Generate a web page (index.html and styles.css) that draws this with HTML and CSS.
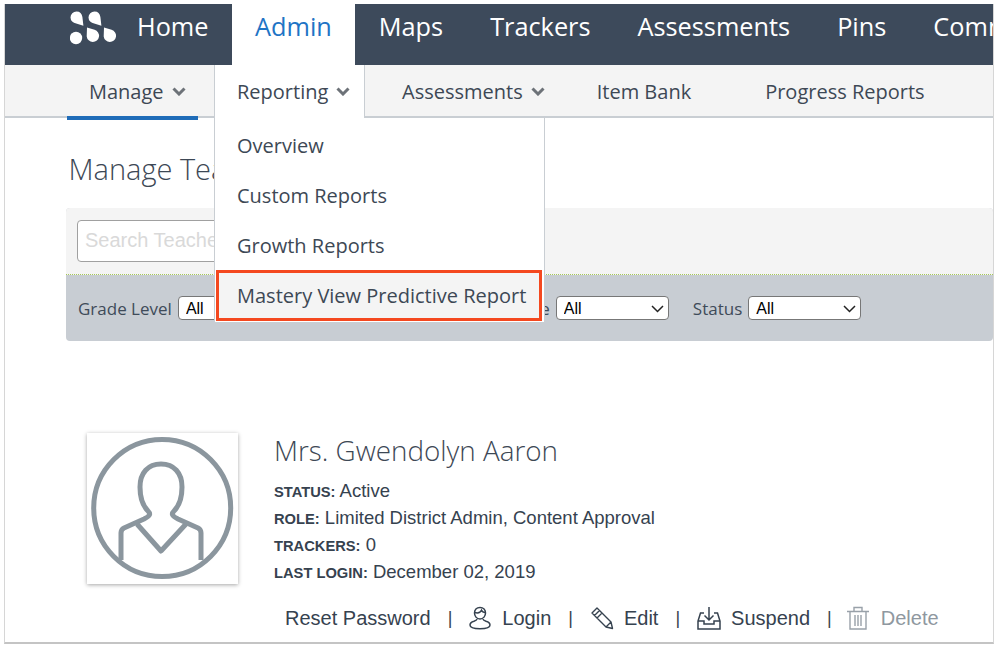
FILE: index.html
```html
<!DOCTYPE html>
<html lang="en">
<head>
<meta charset="utf-8">
<title>Manage Teachers</title>
<link rel="stylesheet" href="styles.css">
</head>
<body>
<div class="frame">
  <nav class="topnav">
    <a class="top-item top-home">
      <svg class="logo" viewBox="0 0 46 34" width="46" height="34" aria-hidden="true">
        <path d="M0.5 6.5a6 6 0 0 1 6-6c3.5 0 5.4 2 5.9 5.5l1 8.7-7.2-2.3a6 6 0 0 1-5.7-5.9z" fill="#fff"/>
        <path d="M18.5 6.5a6 6 0 0 1 6-6c3.5 0 5.4 2 5.9 5.5l1 8.7-7.2-2.3a6 6 0 0 1-5.7-5.9z" fill="#fff"/>
        <circle cx="6" cy="27" r="6.2" fill="#fff"/>
        <path d="M17 16.500l7.600 2.300a6.200 6.200 0 1 1-7.900 6.700z" fill="#fff"/>
        <path d="M34 16.500l7.600 2.300a6.200 6.200 0 1 1-7.900 6.700z" fill="#fff"/>
      </svg>
      <span>Home</span>
    </a>
    <a class="top-item top-active">Admin</a>
    <a class="top-item">Maps</a>
    <a class="top-item">Trackers</a>
    <a class="top-item">Assessments</a>
    <a class="top-item">Pins</a>
    <a class="top-item">Communication</a>
  </nav>

  <nav class="subnav">
    <a class="sub-item sub-manage">Manage <svg class="chev" viewBox="0 0 14 9" aria-hidden="true"><path d="M1.500 1.500l5.500 5.500 5.500-5.500" /></svg></a>
    <a class="sub-item sub-reporting">Reporting <svg class="chev" viewBox="0 0 14 9" aria-hidden="true"><path d="M1.500 1.500l5.500 5.500 5.500-5.500" /></svg></a>
    <a class="sub-item sub-assess">Assessments <svg class="chev" viewBox="0 0 14 9" aria-hidden="true"><path d="M1.500 1.500l5.500 5.500 5.500-5.500" /></svg></a>
    <a class="sub-item sub-bank">Item Bank</a>
    <a class="sub-item sub-progress">Progress Reports</a>
    <ul class="dropdown">
      <li>Overview</li>
      <li>Custom Reports</li>
      <li>Growth Reports</li>
      <li class="dropdown-hl">Mastery View Predictive Report</li>
    </ul>
  </nav>

  <main class="content">
    <h1 class="title">Manage Teachers</h1>
    <section class="filters">
      <div class="search-row">
        <input class="search" type="text" placeholder="Search Teachers">
      </div>
      <div class="filter-row">
        <label class="filter">Grade Level <select class="pick"><option>All</option></select></label>
        <label class="filter filter-site">Site <select class="pick"><option>All</option></select></label>
        <label class="filter filter-course">Course <select class="pick"><option>All</option></select></label>
        <label class="filter">Status <select class="pick"><option>All</option></select></label>
      </div>
    </section>

    <section class="person">
      <div class="avatar">
        <svg viewBox="0 0 151 151" width="151" height="151" aria-hidden="true">
          <circle cx="75.200" cy="75" r="68.500" fill="none" stroke="#8b969e" stroke-width="5"/>
          <path d="M34 127V100c0-3 1-4 3-5l20-9c6-3 7-5 4-8-5-5-8-13-8-24 0-14 8-23 21-23s21 9 21 23c0 11-3 19-8 24-3 3-2 5 4 8l20 9c2 1 3 2 3 5v27" fill="none" stroke="#8b969e" stroke-width="5" stroke-linejoin="round"/>
          <path d="M50 91l24 27 25-27" fill="none" stroke="#8b969e" stroke-width="5" stroke-linejoin="round"/>
        </svg>
      </div>
      <div class="details">
        <h2 class="name">Mrs. Gwendolyn Aaron</h2>
        <p class="meta"><b>STATUS:</b> Active</p>
        <p class="meta"><b>ROLE:</b> Limited District Admin, Content Approval</p>
        <p class="meta"><b>TRACKERS:</b> 0</p>
        <p class="meta"><b>LAST LOGIN:</b> December 02, 2019</p>
      </div>
    </section>

    <div class="actions">
      <a class="action">Reset Password</a>
      <span class="sep">|</span>
      <a class="action action-login">
        <svg class="ico" viewBox="0 0 22 24" width="22" height="24" aria-hidden="true"><path d="M11 1.500c-3.500 0-5.500 2.500-5.500 5.500 0 3 2 6 5.500 6s5.500-3 5.500-6c0-3-2-5.500-5.500-5.500z" fill="none" stroke="#36424f" stroke-width="1.500"/><path d="M5.500 6.500c3 .8 6 .2 7-2.200.5 1.400 2 2.300 4 2.300" fill="none" stroke="#36424f" stroke-width="1.500"/><path d="M8 13c0 1-1 1.500-3 2.200-2.500.8-4 2-4 3.800 0 2.500 3 3.700 10 3.700s10-1.200 10-3.700c0-1.800-1.500-3-4-3.800-2-.7-3-1.200-3-2.200" fill="none" stroke="#36424f" stroke-width="1.500"/></svg>
        Login</a>
      <span class="sep">|</span>
      <a class="action">
        <svg class="ico" viewBox="0 0 24 24" width="24" height="24" aria-hidden="true"><path d="M2 7l5-5 14 14 1.500 6.500-6.500-1.500zM4.500 9.500l5-5M7 12l5-5M16 21l5-5" fill="none" stroke="#36424f" stroke-width="1.400" stroke-linejoin="round"/></svg>
        Edit</a>
      <span class="sep">|</span>
      <a class="action">
        <svg class="ico" viewBox="0 0 24 24" width="24" height="24" aria-hidden="true"><path d="M7 7H3.500L1 15v8h22v-8l-2.500-8H17M1 15h6v3h10v-3h6" fill="none" stroke="#36424f" stroke-width="1.500"/><path d="M12 1v13M7.500 9.500 12 14l4.500-4.500" fill="none" stroke="#36424f" stroke-width="1.500"/></svg>
        Suspend</a>
      <span class="sep">|</span>
      <a class="action action-off">
        <svg class="ico" viewBox="0 0 24 24" width="24" height="24" aria-hidden="true"><path d="M1 5.500h22M8 5.500V1.500h8v4M4 5.500V23h16V5.500M9 9v11M12 9v11M15 9v11" fill="none" stroke="#99a1a9" stroke-width="1.400"/></svg>
        Delete</a>
    </div>
  </main>
</div>
</body>
</html>
```

FILE: styles.css
```css
* { box-sizing: border-box; }
html, body { margin: 0; padding: 0; background: #fff; }
body { height: 646px; overflow: hidden; font-family: "Open Sans", sans-serif; color: #36424f; }

.frame {
  width: 990px;
  height: 640px;
  margin: 4px 0 0 4px;
  border-left: 1px solid #d6d6d6;
  border-right: 1px solid #d6d6d6;
  border-bottom: 2px solid #c4c4c4;
  position: relative;
  overflow: hidden;
  background: #fff;
}

/* top nav */
.topnav {
  display: flex;
  height: 61px;
  background: #3d4a5b;
  white-space: nowrap;
}
.top-item {
  display: flex;
  align-items: center;
  padding: 0 23.5px 17px;
  font-size: 25.3px;
  color: #fff;
}
.top-home { padding-left: 65px; padding-right: 23px; }
.logo { margin-right: 21px; margin-top: 4px; }
.top-active { background: #fff; color: #1f74c5; }

/* sub nav */
.subnav {
  display: flex;
  height: 53px;
  background: #f4f4f4;
  border-bottom: 2px solid #c9ced3;
  position: relative;
  font-size: 20px;
  color: #3d4855;
}
.sub-item {
  display: flex;
  align-items: center;
  gap: 8px;
  height: 52px;
  white-space: nowrap;
}
.chev { width: 14px; height: 9px; fill: none; stroke: #6d7278; stroke-width: 3; }
.sub-manage {
  margin-left: 62px;
  width: 131px;
  padding-left: 22px;
  border-bottom: 4px solid #1f6cb8;
  height: 55px;
  padding-top: 2px;
  margin-right: 16px;
}
.sub-reporting {
  width: 151px;
  padding-left: 22px;
  padding-bottom: 1px;
  background: #fff;
  height: 53px;
  border-left: 1px solid #c9ced3;
  border-right: 1px solid #c9ced3;
}
.sub-assess { margin-left: 37px; }
.sub-bank { margin-left: 52px; }
.sub-progress { margin-left: 74px; }

.dropdown {
  position: absolute;
  left: 209px;
  top: 53px;
  width: 331px;
  margin: 0;
  padding: 3px 0 1px;
  list-style: none;
  background: #fff;
  border: 1px solid #c9ced3;
  border-top: 0;
  z-index: 5;
}
.dropdown li {
  height: 50px;
  padding-left: 22px;
  line-height: 50px;
  white-space: nowrap;
}
.dropdown-hl {
  background: #f4f4f4;
  outline: 3px solid #f4481f;
  outline-offset: -3px;
  margin: -1px 2px 0 1px;
  padding-left: 21px !important;
  height: 51px !important;
  line-height: 52px !important;
}

/* content */
.content { padding: 0 0 0 61px; }
.title {
  margin: 30px 0 19px;
  height: 41px;
  font-size: 29px;
  line-height: 41px;
  font-weight: 300;
  color: #3d4855;
  padding-left: 2.500px;
}
.filters {
  height: 133px;
  border-radius: 4px;
  background: #c8cdd3;
  overflow: hidden;
}
.search-row {
  height: 67px;
  background: #f4f4f4;
  border-bottom: 1px dotted #a7c957;
  padding: 12px 11px;
}
.search {
  display: block;
  width: 300px;
  height: 42px;
  border: 1px solid #a0a0a0;
  border-radius: 4px;
  background: #fff;
  padding: 0 7px 2px;
  font: 20px "Liberation Sans", sans-serif;
}
.search::placeholder { color: #d9d9d9; opacity: 1; }
.filter-row {
  display: flex;
  align-items: center;
  gap: 24px;
  padding: 21px 12px 0;
}
.filter {
  display: flex;
  align-items: center;
  gap: 6px;
  font-size: 17px;
  color: #3f4b59;
  white-space: nowrap;
}
.filter-site { width: 149px; }
.filter-course { margin-left: 6px; }
.pick {
  appearance: none;
  flex: none;
  width: 113px;
  height: 24px;
  padding: 0 0 0 7px;
  border: 1px solid #777;
  border-radius: 4px;
  font: 16px "Liberation Sans", sans-serif;
  color: #000;
  background: #fff url("data:image/svg+xml,%3Csvg xmlns='http://www.w3.org/2000/svg' width='13' height='8'%3E%3Cpath d='M1 1l5.500 5.500L12 1' fill='none' stroke='%23222' stroke-width='1.500'/%3E%3C/svg%3E") no-repeat 94px 8px;
}

/* person */
.person { display: flex; margin: 92px 0 0 21px; }
.avatar {
  width: 151px;
  height: 151px;
  background: #fff;
  box-shadow: 0 1px 4px rgba(0,0,0,.35);
  flex: none;
}
.avatar svg { display: block; }
.details { margin-left: 36px; font-family: "Liberation Sans", sans-serif; }
.name {
  margin: -1px 0 8px;
  font: 300 27.800px/37px "Open Sans", sans-serif;
  color: #3d4855;
}
.meta {
  margin: 0;
  height: 27px;
  font-size: 18.500px;
  line-height: 27px;
  color: #36424f;
  white-space: nowrap;
}
.meta b { font-size: 14.700px; }

/* actions */
.actions {
  display: flex;
  align-items: center;
  margin: 17px 0 0 219px;
  height: 32px;
  font: 20px "Liberation Sans", sans-serif;
  color: #36424f;
  white-space: nowrap;
}
.action { display: flex; align-items: center; gap: 10px; }
.action-login { gap: 11px; }
.action-off { color: #8f98a0; gap: 11px; }
.action-off .ico { margin-left: -3px; }
.sep { margin: 0 17px; font-size: 18px; }
.ico { flex: none; }
```
